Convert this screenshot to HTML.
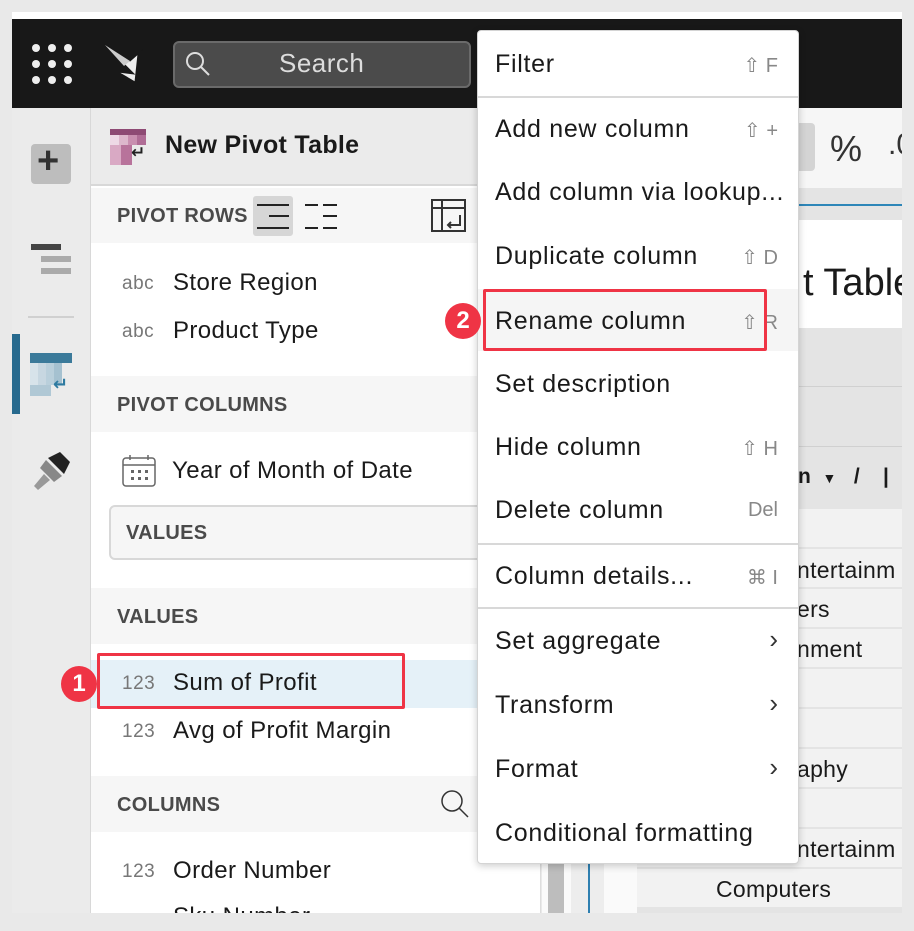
<!DOCTYPE html>
<html><head><meta charset="utf-8"><style>
*{box-sizing:border-box;margin:0;padding:0}
body{width:914px;height:926px;background:#e9e9e9;font-family:"Liberation Sans","DejaVu Sans",sans-serif;position:relative;overflow:hidden;color:#1a1a1a}
.a{position:absolute}
.t{position:absolute;white-space:nowrap}
.hdr{font-size:20px;font-weight:bold;color:#4a4a4a;letter-spacing:0.3px}
.lbl{font-size:24px;color:#1a1a1a;letter-spacing:0.4px}
.typ{font-size:19px;color:#777;letter-spacing:0.5px}
.mi{position:absolute;left:17px;font-size:25px;color:#1a1a1a;white-space:nowrap;letter-spacing:0.7px}
.sc{position:absolute;right:20px;font-size:20px;color:#888;white-space:nowrap}
.sep{position:absolute;left:0;right:0;height:2px;background:#d8d8d8}
.row{position:absolute;left:637px;width:265px;height:38px;background:#f2f2f2}
.rt{position:absolute;font-size:23px;color:#1a1a1a;white-space:nowrap;letter-spacing:0.3px}
</style></head><body>
<div class="a" style="left:12px;top:12px;width:890px;height:7px;background:#fff"></div>
<div class="a" style="left:12px;top:19px;width:890px;height:89px;background:#181818"></div>
<svg class="a" style="left:30px;top:42px" width="44" height="44"><g fill="#eee"><circle cx="6" cy="6" r="4"/><circle cx="22" cy="6" r="4"/><circle cx="38" cy="6" r="4"/><circle cx="6" cy="22" r="4"/><circle cx="22" cy="22" r="4"/><circle cx="38" cy="22" r="4"/><circle cx="6" cy="38" r="4"/><circle cx="22" cy="38" r="4"/><circle cx="38" cy="38" r="4"/></g></svg>
<svg class="a" style="left:104px;top:44px" width="46" height="42"><path d="M1 1 L26 17 L42 3 L34 10 L31 38 L14 28 L30 30 Z" fill="#eee" stroke="#181818" stroke-width="1"/><path d="M1 1 L26 17 L20 22Z" fill="#ccc"/></svg>
<div class="a" style="left:173px;top:41px;width:298px;height:47px;background:#4b4b4b;border:2px solid #6a6a6a;border-radius:6px"></div>
<svg class="a" style="left:185px;top:51px" width="26" height="26"><circle cx="10" cy="10" r="8" fill="none" stroke="#ddd" stroke-width="2"/><line x1="16" y1="16" x2="24" y2="24" stroke="#ddd" stroke-width="2"/></svg>
<div class="t" style="left:279px;top:48px;font-size:26px;color:#ddd;letter-spacing:0.5px">Search</div>
<div class="a" style="left:12px;top:108px;width:79px;height:805px;background:#ebebeb;border-right:1px solid #d8d8d8"></div>
<div class="a" style="left:31px;top:144px;width:40px;height:40px;background:#bdbdbd;border-radius:4px"></div>
<div class="t" style="left:37px;top:140px;font-size:38px;color:#333;font-weight:bold">+</div>
<div class="a" style="left:31px;top:244px;width:30px;height:6px;background:#444"></div>
<div class="a" style="left:41px;top:256px;width:30px;height:6px;background:#aaa"></div>
<div class="a" style="left:41px;top:268px;width:30px;height:6px;background:#aaa"></div>
<div class="a" style="left:28px;top:316px;width:46px;height:2px;background:#d0d0d0"></div>
<div class="a" style="left:12px;top:334px;width:8px;height:80px;background:#276a8e"></div>
<div class="a" style="left:30px;top:353px;width:42px;height:10px;background:#3b7a9a"></div>
<div class="a" style="left:30px;top:363px;width:32px;height:22px;background:linear-gradient(90deg,#d7e3ea 0 25%,#c7d7e1 25% 50%,#b9cfdb 50% 75%,#a5c1d0 75%)"></div>
<div class="a" style="left:30px;top:385px;width:21px;height:11px;background:#b0c8d5"></div>
<div class="t" style="left:53px;top:374px;font-size:18px;color:#2e7aa0;font-weight:bold">↵</div>
<svg class="a" style="left:30px;top:450px" width="42" height="42"><path d="M18 8 L30 2 L40 12 L34 24 Z" fill="#222"/><path d="M16 10 L32 26 L24 32 L10 18Z" fill="#888"/><path d="M14 24 L4 36 L8 40 L20 30Z" fill="#999"/></svg>
<div class="a" style="left:91px;top:108px;width:450px;height:805px;background:#fff;border-right:1px solid #ddd"></div>
<div class="a" style="left:91px;top:108px;width:450px;height:78px;background:#ebebeb;border-bottom:2px solid #d8d8d8"></div>
<div class="a" style="left:110px;top:129px;width:36px;height:6px;background:#8e4a74"></div>
<div class="a" style="left:110px;top:135px;width:36px;height:10px;background:linear-gradient(90deg,#eed9e6 0 25%,#ddb7cc 25% 50%,#c98fb0 50% 75%,#b06d96 75%)"></div>
<div class="a" style="left:110px;top:145px;width:22px;height:20px;background:linear-gradient(90deg,#d9a9c4 0 50%,#b8739b 50%)"></div>
<div class="t" style="left:131px;top:143px;font-size:17px;font-weight:bold;color:#222">↵</div>
<div class="t" style="left:165px;top:131px;font-size:25px;font-weight:bold;color:#1a1a1a;letter-spacing:0.3px">New Pivot Table</div>
<div class="a" style="left:91px;top:188px;width:450px;height:55px;background:#f6f6f6"></div>
<div class="t hdr" style="left:117px;top:205px">PIVOT ROWS</div>
<div class="a" style="left:253px;top:196px;width:40px;height:40px;background:#d6d6d6;border-radius:3px"></div>
<svg class="a" style="left:256px;top:202px" width="36" height="30"><g stroke="#222" stroke-width="2"><line x1="1" y1="3" x2="33" y2="3"/><line x1="13" y1="14" x2="33" y2="14"/><line x1="1" y1="26" x2="33" y2="26"/></g></svg>
<svg class="a" style="left:304px;top:202px" width="36" height="30"><g stroke="#222" stroke-width="2"><line x1="1" y1="3" x2="14" y2="3"/><line x1="19" y1="3" x2="33" y2="3"/><line x1="19" y1="14" x2="33" y2="14"/><line x1="1" y1="26" x2="14" y2="26"/><line x1="19" y1="26" x2="33" y2="26"/></g></svg>
<svg class="a" style="left:431px;top:199px" width="36" height="34"><rect x="1" y="1" width="33" height="31" fill="none" stroke="#333" stroke-width="2"/><line x1="1" y1="9" x2="34" y2="9" stroke="#333" stroke-width="2"/><line x1="11" y1="1" x2="11" y2="32" stroke="#333" stroke-width="2"/><path d="M29 16 V26 H17 M20 23 L17 26 L20 29" fill="none" stroke="#333" stroke-width="2"/></svg>
<div class="t typ" style="left:122px;top:273px">abc</div><div class="t lbl" style="left:173px;top:269px">Store Region</div>
<div class="t typ" style="left:122px;top:321px">abc</div><div class="t lbl" style="left:173px;top:317px">Product Type</div>
<div class="a" style="left:91px;top:376px;width:450px;height:56px;background:#f6f6f6"></div>
<div class="t hdr" style="left:117px;top:394px">PIVOT COLUMNS</div>
<svg class="a" style="left:122px;top:454px" width="36" height="34"><rect x="1" y="4" width="32" height="28" rx="3" fill="none" stroke="#666" stroke-width="1.5"/><line x1="1" y1="11" x2="33" y2="11" stroke="#666" stroke-width="1.5"/><line x1="8" y1="1" x2="8" y2="6" stroke="#666" stroke-width="1.5"/><line x1="26" y1="1" x2="26" y2="6" stroke="#666" stroke-width="1.5"/><g fill="#666"><rect x="9" y="16" width="3" height="3"/><rect x="16" y="16" width="3" height="3"/><rect x="23" y="16" width="3" height="3"/><rect x="9" y="23" width="3" height="3"/><rect x="16" y="23" width="3" height="3"/><rect x="23" y="23" width="3" height="3"/></g></svg>
<div class="t lbl" style="left:172px;top:457px">Year of Month of Date</div>
<div class="a" style="left:109px;top:505px;width:420px;height:55px;background:#f6f6f6;border:2px solid #d8d8d8;border-radius:6px"></div>
<div class="t hdr" style="left:126px;top:522px">VALUES</div>
<div class="a" style="left:91px;top:588px;width:450px;height:56px;background:#f6f6f6"></div>
<div class="t hdr" style="left:117px;top:606px">VALUES</div>
<div class="a" style="left:91px;top:660px;width:450px;height:48px;background:#e5f1f8"></div>
<div class="t typ" style="left:122px;top:673px">123</div><div class="t lbl" style="left:173px;top:669px">Sum of Profit</div>
<div class="t typ" style="left:122px;top:721px">123</div><div class="t lbl" style="left:173px;top:717px">Avg of Profit Margin</div>
<div class="a" style="left:91px;top:776px;width:450px;height:56px;background:#f6f6f6"></div>
<div class="t hdr" style="left:117px;top:794px">COLUMNS</div>
<svg class="a" style="left:440px;top:789px" width="30" height="30"><circle cx="12" cy="12" r="10" fill="none" stroke="#333" stroke-width="1.5"/><line x1="19" y1="19" x2="28" y2="28" stroke="#333" stroke-width="1.5"/></svg>
<div class="t typ" style="left:122px;top:861px">123</div><div class="t lbl" style="left:173px;top:857px">Order Number</div>
<div class="t lbl" style="left:173px;top:903px">Sku Number</div>
<div class="a" style="left:542px;top:108px;width:95px;height:805px;background:#fafafa"></div>
<div class="a" style="left:548px;top:860px;width:16px;height:53px;background:#bdbdbd"></div>
<div class="a" style="left:571px;top:860px;width:33px;height:53px;background:#ededed"></div>
<div class="a" style="left:588px;top:860px;width:2px;height:53px;background:#2e7fb0"></div>
<div class="a" style="left:637px;top:108px;width:265px;height:805px;background:#e4e4e4"></div>
<div class="a" style="left:790px;top:108px;width:112px;height:80px;background:#f6f6f6"></div>
<div class="a" style="left:790px;top:123px;width:25px;height:48px;background:#d4d4d4;border-radius:4px"></div>
<div class="t" style="left:830px;top:128px;font-size:36px;color:#333">%</div>
<div class="t" style="left:888px;top:128px;font-size:30px;color:#333">.0</div>
<div class="a" style="left:790px;top:204px;width:112px;height:2px;background:#2e86b8"></div>
<div class="a" style="left:790px;top:220px;width:112px;height:108px;background:#fff"></div>
<div class="t" style="left:803px;top:262px;font-size:38px;color:#1a1a1a">t Table</div>
<div class="a" style="left:790px;top:386px;width:112px;height:1px;background:#d0d0d0"></div>
<div class="a" style="left:790px;top:446px;width:112px;height:1px;background:#d0d0d0"></div>
<div class="t" style="left:798px;top:465px;font-size:21px;font-weight:bold">n &nbsp;<span style="font-size:14px">▼</span>&nbsp;&nbsp; /&nbsp;&nbsp;&nbsp; |</div>
<div class="row" style="top:509px"></div>
<div class="row" style="top:549px"></div>
<div class="row" style="top:589px"></div>
<div class="row" style="top:629px"></div>
<div class="row" style="top:669px"></div>
<div class="row" style="top:709px"></div>
<div class="row" style="top:749px"></div>
<div class="row" style="top:789px"></div>
<div class="row" style="top:829px"></div>
<div class="row" style="top:869px"></div>
<div class="rt" style="left:797px;top:557px">ntertainm</div>
<div class="rt" style="left:797px;top:596px">ers</div>
<div class="rt" style="left:797px;top:636px">nment</div>
<div class="rt" style="left:797px;top:756px">aphy</div>
<div class="rt" style="left:797px;top:836px">ntertainm</div>
<div class="rt" style="left:716px;top:876px">Computers</div>
<div class="a" style="left:0;top:913px;width:914px;height:13px;background:#e9e9e9"></div>
<div class="a" style="left:902px;top:0;width:12px;height:926px;background:#e9e9e9"></div>
<div class="a" style="left:477px;top:30px;width:322px;height:834px;background:#fff;border:1px solid #d4d4d4;border-radius:4px;box-shadow:0 2px 8px rgba(0,0,0,.2)">
 <div class="mi" style="top:19px">Filter</div><div class="sc" style="top:22px">⇧ F</div>
 <div class="sep" style="top:65px"></div>
 <div class="mi" style="top:84px">Add new column</div><div class="sc" style="top:87px">⇧ +</div>
 <div class="mi" style="top:147px">Add column via lookup...</div>
 <div class="mi" style="top:211px">Duplicate column</div><div class="sc" style="top:214px">⇧ D</div>
 <div class="a" style="left:0;right:0;top:258px;height:62px;background:#f5f5f5"></div>
 <div class="mi" style="top:276px">Rename column</div><div class="sc" style="top:279px">⇧ R</div>
 <div class="mi" style="top:339px">Set description</div>
 <div class="mi" style="top:402px">Hide column</div><div class="sc" style="top:405px">⇧ H</div>
 <div class="mi" style="top:465px">Delete column</div><div class="sc" style="top:468px">Del</div>
 <div class="sep" style="top:512px"></div>
 <div class="mi" style="top:531px">Column details...</div><div class="sc" style="top:534px">⌘ I</div>
 <div class="sep" style="top:576px"></div>
 <div class="mi" style="top:596px">Set aggregate</div><div class="sc" style="top:593px;color:#333;font-size:26px">›</div>
 <div class="mi" style="top:660px">Transform</div><div class="sc" style="top:657px;color:#333;font-size:26px">›</div>
 <div class="mi" style="top:724px">Format</div><div class="sc" style="top:721px;color:#333;font-size:26px">›</div>
 <div class="mi" style="top:788px">Conditional formatting</div>
</div>
<div class="a" style="left:483px;top:289px;width:284px;height:62px;border:3px solid #ef3445;border-radius:2px"></div>
<div class="a" style="left:97px;top:653px;width:308px;height:56px;border:3px solid #ef3445;border-radius:2px"></div>
<div class="a" style="left:445px;top:303px;width:36px;height:36px;border-radius:50%;background:#ef3445;color:#fff;font-weight:bold;font-size:24px;text-align:center;line-height:36px">2</div>
<div class="a" style="left:61px;top:666px;width:36px;height:36px;border-radius:50%;background:#ef3445;color:#fff;font-weight:bold;font-size:24px;text-align:center;line-height:36px">1</div>
</body></html>
